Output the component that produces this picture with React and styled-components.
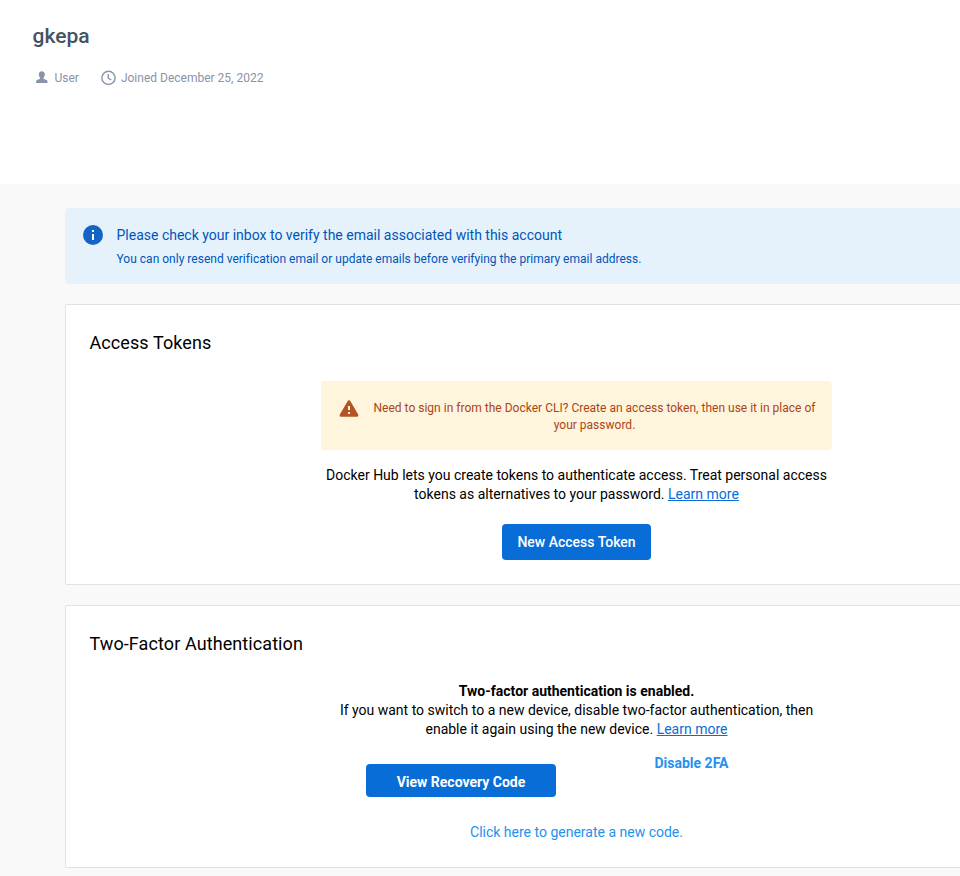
import React from "react";
import styled, { createGlobalStyle } from "styled-components";

const GlobalStyle = createGlobalStyle`
  * { box-sizing: border-box; }
  body { margin: 0; background: #f9f9f9; font-family: Roboto, sans-serif; font-size: 14px; line-height: 19px; color: #000; }
  #root { height: 876px; overflow: hidden; }
`;

const Header = styled.header`
  height: 184px;
  padding: 22px 32.5px 0;
  background: #fff;
`;
const UserName = styled.h1`
  margin: 0;
  font-size: 21px;
  line-height: 28px;
  font-weight: 500;
  color: #445262;
`;
const Meta = styled.div`
  display: flex;
  align-items: center;
  gap: 21px;
  margin-top: 19px;
  color: #8993a5;
  font-size: 12px;
  line-height: 18px;
`;
const MetaItem = styled.span`
  display: flex;
  align-items: center;
  gap: ${(p) => p.$gap}px;
  svg { flex: none; margin-top: -1px; color: #8b93ab; }
`;

const Content = styled.main`
  display: flex;
  flex-direction: column;
  gap: 20px;
  width: 1024px;
  padding: 24px 0 0 65px;
`;
const InfoBanner = styled.section`
  display: flex;
  gap: 13.5px;
  height: 76px;
  padding: 17px 18px;
  border-radius: 4px;
  background: #e5f2fc;
  color: #0055ba;
  svg { flex: none; }
`;
const BannerTitle = styled.div`
  font-size: 14px;
  line-height: 20px;
`;
const BannerText = styled.div`
  margin-top: 5px;
  font-size: 12px;
  line-height: 18px;
  letter-spacing: 0.01px;
`;

const Card = styled.section`
  width: 1023px;
  height: ${(p) => p.$height}px;
  padding: 25px 24px;
  border: 1px solid #e1e2e6;
  border-radius: 2px;
  background: #fff;
`;
const CardTitle = styled.h2`
  margin: 0 0 0 -0.5px;
  font-size: 18px;
  line-height: 26px;
  font-weight: 400;
  letter-spacing: 0.09px;
`;
const CardBody = styled.div`
  display: flex;
  flex-direction: column;
  align-items: center;
  width: 511px;
  margin: 25px 0 0 231px;
  text-align: center;
`;
const Warning = styled.div`
  display: flex;
  align-items: flex-start;
  gap: 14.5px;
  width: 511px;
  height: 69px;
  padding: 18px 15px 0 18px;
  border-radius: 4px;
  background: #fff4dc;
  color: #ac4514;
  font-size: 12px;
  line-height: 17px;
  svg { flex: none; }
`;
const WarningText = styled.div`
  padding-top: 1px;
  letter-spacing: 0.01px;
  white-space: nowrap;
`;
const Copy = styled.p`
  margin: ${(p) => p.$top || 0}px 0 0;
  white-space: nowrap;
`;
const Link = styled.a`
  color: #086dd7;
  text-decoration: underline;
`;
const Button = styled.button`
  width: ${(p) => p.$width}px;
  height: ${(p) => p.$height}px;
  padding: ${(p) => p.$padTop || 0}px 0 0;
  border: 0;
  border-radius: 4px;
  background: #086dd7;
  color: #fff;
  font: ${(p) => p.$weight || 500} 14px/20px Roboto, sans-serif;
`;
const NewToken = styled(Button)`
  margin-top: 20px;
`;
const Actions = styled.div`
  display: flex;
  align-items: flex-start;
  gap: 98.5px;
  width: 421px;
  margin: 14px 0 0;
`;
const RecoveryButton = styled(Button)`
  margin-top: 11px;
`;
const TextButton = styled.button`
  padding: 0;
  border: 0;
  background: none;
  color: #2391ee;
  white-space: nowrap;
  font: ${(p) => p.$weight || 400} 14px/20px Roboto, sans-serif;
`;
const Generate = styled(TextButton)`
  margin-top: 25px;
`;

const UserIcon = () => (
  <svg width="16" height="16" viewBox="0 0 16 16" fill="currentColor">
    <path d="M8.800 1.300c2 0 3 1.300 3 3.200 0 1.300-.5 2.500-1.300 3.200v1.100l2.900 1.200c.8.300 1.100.8 1.100 1.600v1.400H3.100v-1.400c0-.8.300-1.300 1.100-1.600l2.900-1.200V7.700C6.300 7 5.800 5.800 5.800 4.500c0-1.900 1-3.200 3-3.200z" />
  </svg>
);
const ClockIcon = () => (
  <svg width="16" height="16" viewBox="0 0 16 16" fill="none" stroke="currentColor" strokeWidth="1.4">
    <circle cx="8.5" cy="7.900" r="6.600" />
    <path d="M8.300 4v4.200l3 1.800" />
  </svg>
);
const InfoIcon = () => (
  <svg width="20" height="20" viewBox="0 0 20 20">
    <circle cx="10" cy="10" r="10" fill="#1364c4" />
    <path d="M9 5h2v2H9zM9 9h2v6H9z" fill="#fff" />
  </svg>
);
const WarningIcon = () => (
  <svg width="20" height="20" viewBox="0 0 20 20">
    <path d="M10 2.800 17.900 16.200H2.100z" fill="#b45425" stroke="#b45425" strokeWidth="3" strokeLinejoin="round" />
    <path d="M9 7h2v4H9zM9 13h2v2H9z" fill="#fff4dc" />
  </svg>
);

export default function App() {
  return (
    <>
      <GlobalStyle />
      <Header>
        <UserName>gkepa</UserName>
        <Meta>
          <MetaItem $gap={6}><UserIcon />User</MetaItem>
          <MetaItem $gap={5}><ClockIcon />Joined December 25, 2022</MetaItem>
        </Meta>
      </Header>
      <Content>
        <InfoBanner>
          <InfoIcon />
          <div>
            <BannerTitle>Please check your inbox to verify the email associated with this account</BannerTitle>
            <BannerText>You can only resend verification email or update emails before verifying the primary email address.</BannerText>
          </div>
        </InfoBanner>
        <Card $height={281}>
          <CardTitle>Access Tokens</CardTitle>
          <CardBody>
            <Warning>
              <WarningIcon />
              <WarningText>Need to sign in from the Docker CLI? Create an access token, then use it in place of<br />your password.</WarningText>
            </Warning>
            <Copy $top={16}>
              Docker Hub lets you create tokens to authenticate access. Treat personal access<br />
              tokens as alternatives to your password. <Link>Learn more</Link>
            </Copy>
            <NewToken $width={149} $height={36}>New Access Token</NewToken>
          </CardBody>
        </Card>
        <Card $height={263}>
          <CardTitle>Two-Factor Authentication</CardTitle>
          <CardBody>
            <Copy>
              <b>Two-factor authentication is enabled.</b><br />
              If you want to switch to a new device, disable two-factor authentication, then<br />
              enable it again using the new device. <Link>Learn more</Link>
            </Copy>
            <Actions>
              <RecoveryButton $width={190} $height={33} $padTop={3} $weight={700}>View Recovery Code</RecoveryButton>
              <TextButton $weight={700}>Disable 2FA</TextButton>
            </Actions>
            <Generate>Click here to generate a new code.</Generate>
          </CardBody>
        </Card>
      </Content>
    </>
  );
}
